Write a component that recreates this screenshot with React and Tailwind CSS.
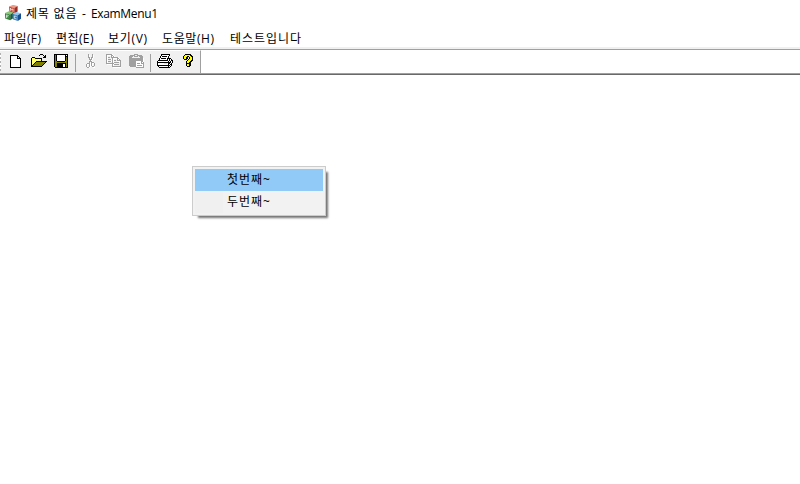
import React from "react";

const COLORS = {
  "#": "#000000",
  w: "#ffffff",
  y: "#ffff00",
  p: "#ffff66",
  o: "#808000",
  g: "#a0a0a0",
};

const NEW = [
  "########...",
  "#wwwwww##..",
  "#wwwwww#w#.",
  "#wwwwww####",
  "#wwwwwwwww#",
  "#wwwwwwwww#",
  "#wwwwwwwww#",
  "#wwwwwwwww#",
  "#wwwwwwwww#",
  "#wwwwwwwww#",
  "#wwwwwwwww#",
  "#wwwwwwwww#",
  "###########",
];

const OPEN = [
  ".........###....",
  "........#...#.#.",
  ".............##.",
  ".###........###.",
  "#pwp#######.....",
  "#wpwpwpwpw#.....",
  "#pwpwpwpwp#.....",
  "#wpwp###########",
  "#pwp#ooooooooo#.",
  "#wp#ooooooooo#..",
  "#p#ooooooooo#...",
  "##ooooooooo#....",
  "###########.....",
];

const SAVE = [
  "##############",
  "#o#wwwwwwww#w#",
  "#o#wwwwwwww###",
  "#o#wwwwwwww#o#",
  "#o#wwwwwwww#o#",
  "#o#wwwwwwww#o#",
  "#o#wwwwwwww#o#",
  "#oo########oo#",
  "#oooooooooooo#",
  "#oo#########o#",
  "#oo######ww#o#",
  "#oo######ww#o#",
  "#oo######ww#o#",
  ".#############",
];

const CUT = [
  "..g...g..",
  "..gw..gw.",
  "..gw..gw.",
  "..gg.ggw.",
  "...gwgw..",
  "...gggw..",
  "....gw...",
  "...gggw..",
  "...gwggg.",
  ".gggwgwwg",
  "gwwgwgw.g",
  "gw.gwgw.g",
  "gw.gw.gg.",
  ".ggw...ww",
];

const COPY = [
  "ggggggw........",
  "gwwwwggw.......",
  "gw...gwgw......",
  "gwgg.gggggggw..",
  "gw....gwwwwggw.",
  "gwgggwgw...gwg.",
  "gw....gwgg.gggg",
  "gwgggwgw...wwwg",
  "gw....gwggggg.g",
  "ggggggggw.....g",
  ".wwwwwgwggggg.g",
  "......gw......g",
  "......ggggggggg",
  ".......wwwwwwww",
];

const PASTE = [
  ".....gggg......",
  ".ggggg..ggggg..",
  "gggg.gggg.gggg.",
  "ggg........ggg.",
  "ggggggggggggggw",
  "ggggggggggggggw",
  "ggggggggggggggw",
  "gggggggwwwwwggw",
  "gggggggwwwwwgwg",
  "gggggggwgggwggg",
  "gggggggwwwwwwwg",
  "gggggggwgggggwg",
  ".ggggggwwwwwwwg",
  ".......gggggggg",
];

const PRINT = [
  "....#########...",
  "....#wwwwwww#...",
  "...#w#####w#....",
  "...#wwwwwww#....",
  "..#w#####w####..",
  "..#wwwwwww#w#w#.",
  ".##########w#w##",
  "#wwwwwwwwww#w#w#",
  "##############w#",
  "#wwwwwwyyyw##w#.",
  "#wwwwwwwwww#w##.",
  "#############w#.",
  ".#wwwwwwwww#w#..",
  "..###########...",
];

const HELP = [
  "..######..",
  ".#yyyyy##.",
  "#yyy##yy##",
  "#yy##.#yy#",
  "#yy##.#yy#",
  ".###.#yyy#",
  "....#yyy##",
  "...#yyy##.",
  "...#yy##..",
  "...#####..",
  "...#yy##..",
  "...#yy##..",
  "....###...",
];

function Bitmap({ rows, className }) {
  return (
    <svg
      width={rows[0].length}
      height={rows.length}
      shapeRendering="crispEdges"
      className={"block shrink-0 " + className}
    >
      {rows.flatMap((row, y) =>
        [...row].map((c, x) =>
          COLORS[c] ? <rect key={x + "-" + y} x={x} y={y} width="1" height="1" fill={COLORS[c]} /> : null
        )
      )}
    </svg>
  );
}

function Cube({ x, y, light, mid, dark, mark }) {
  return (
    <g transform={`translate(${x} ${y})`}>
      <path d="M0 1.8 4 0 8.6 1.2 5.4 3.2Z" fill={light} />
      <path d="M0 1.8 5.4 3.2V9L.4 7.2Z" fill={mid} />
      <path d="M5.4 3.2 8.6 1.2V6.8L5.4 9Z" fill={dark} />
      <path d={mark} fill="none" stroke="#fff" strokeOpacity="0.85" strokeWidth="0.8" />
    </g>
  );
}

function AppIcon() {
  return (
    <svg width="16" height="16" viewBox="0 0 16 16" className="block shrink-0">
      <Cube x={4} y={-0.2} light="#ee9a84" mid="#d5452f" dark="#9f2a22" mark="M1.4 6V3.3L2.7 5.2 4 4V7" />
      <Cube x={-0.2} y={6.3} light="#8cc878" mid="#35843a" dark="#1d5a2c" mark="M1.6 6.8V3.6L3.9 4.3M1.6 5.1 3.5 5.7" />
      <Cube x={7.4} y={7} light="#8fc9ee" mid="#3583c6" dark="#174f90" mark="M4.2 4.4 1.9 4V6.3L4.2 7" />
    </svg>
  );
}

function Separator({ className }) {
  return <div className={"mt-[3px] h-[18px] w-px shrink-0 bg-[#a0a0a0] " + className} />;
}

function MenuItem({ className, children }) {
  return <span className={"shrink-0 whitespace-nowrap " + className}>{children}</span>;
}

export default function App() {
  return (
    <div className="relative h-[484px] w-[800px] overflow-hidden bg-white font-['Open_Sans','Noto_Sans_CJK_KR',sans-serif] text-[12px] text-black">
      <header className="flex h-[27px] items-start pl-[5px] pt-[5px]">
        <AppIcon />
        <span className="ml-[5px] w-[56px] whitespace-nowrap leading-[17px] tracking-[0.8px]">제목 없음</span>
        <span className="w-[9px] leading-[17px]">-</span>
        <span className="whitespace-nowrap leading-[17px] tracking-[-0.35px]">ExamMenu1</span>
      </header>
      <nav className="flex h-5 pl-[4px] leading-[24px]">
        <MenuItem className="w-[52px] tracking-[0.4px]">파일(F)</MenuItem>
        <MenuItem className="w-[52px] tracking-[0.4px]">편집(E)</MenuItem>
        <MenuItem className="w-[54px] tracking-[0.7px]">보기(V)</MenuItem>
        <MenuItem className="w-[68px] tracking-[0.6px]">도움말(H)</MenuItem>
        <MenuItem className="tracking-[0.96px]">테스트입니다</MenuItem>
      </nav>
      <div className="h-[2px] bg-[#f0f0f0]" />
      <div className="h-[26px] border-b border-t border-b-[#696969] border-t-[#a0a0a0]">
        <div className="h-full border-b border-[#a0a0a0]">
          <div className="flex h-full w-[201px] items-start border-r border-t border-r-[#a0a0a0] border-t-white bg-[#f0f0f0]">
            <div className="mt-[2px] h-[18px] w-px shrink-0 bg-[repeating-linear-gradient(#b0b0b0_0_2px,#fff_2px_4px)]" />
            <Bitmap rows={NEW} className="ml-[9px] mt-[4px]" />
            <Bitmap rows={OPEN} className="ml-[10px] mt-[3px]" />
            <Bitmap rows={SAVE} className="ml-[7px] mt-[3px]" />
            <Separator className="ml-[7px]" />
            <Bitmap rows={CUT} className="ml-[10px] mt-[3px]" />
            <Bitmap rows={COPY} className="ml-[11px] mt-[3px]" />
            <Bitmap rows={PASTE} className="ml-[8px] mt-[3px]" />
            <Separator className="ml-[6px]" />
            <Bitmap rows={PRINT} className="ml-[6px] mt-[3px]" />
            <Bitmap rows={HELP} className="ml-[10px] mt-[3px]" />
          </div>
        </div>
      </div>
      <div
        role="menu"
        className="absolute left-[192px] top-[166px] h-[50px] w-[134px] border border-[#cccccc] bg-[#f2f2f2] p-[2px] leading-[22px] tracking-[0.95px] shadow-[4px_4px_2px_-2px_rgba(0,0,0,0.55)]"
      >
        <div role="menuitem" className="h-[22px] bg-[#91c9f7] pl-[32px]">첫번째~</div>
        <div role="menuitem" className="h-[22px] bg-[linear-gradient(90deg,#f0f0f0_28px,#f2f2f2_28px)] pl-[32px]">두번째~</div>
      </div>
    </div>
  );
}
